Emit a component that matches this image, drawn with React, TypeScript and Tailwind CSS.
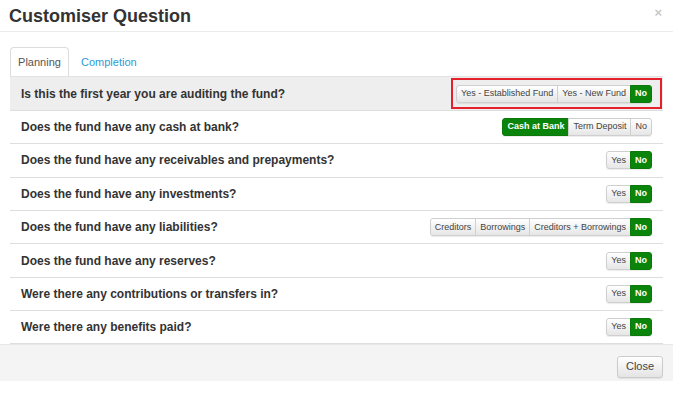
import React from 'react';

type Question = { text: string; options: string[]; active: string };

const questions: Question[] = [
  { text: 'Is this the first year you are auditing the fund?', options: ['Yes - Established Fund', 'Yes - New Fund', 'No'], active: 'No' },
  { text: 'Does the fund have any cash at bank?', options: ['Cash at Bank', 'Term Deposit', 'No'], active: 'Cash at Bank' },
  { text: 'Does the fund have any receivables and prepayments?', options: ['Yes', 'No'], active: 'No' },
  { text: 'Does the fund have any investments?', options: ['Yes', 'No'], active: 'No' },
  { text: 'Does the fund have any liabilities?', options: ['Creditors', 'Borrowings', 'Creditors + Borrowings', 'No'], active: 'No' },
  { text: 'Does the fund have any reserves?', options: ['Yes', 'No'], active: 'No' },
  { text: 'Were there any contributions or transfers in?', options: ['Yes', 'No'], active: 'No' },
  { text: 'Were there any benefits paid?', options: ['Yes', 'No'], active: 'No' },
];

const ButtonGroup: React.FC<{ options: string[]; active: string }> = ({ options, active }) => (
  <div className="flex h-[18px] rounded-[3px] shadow-[0_1px_1px_rgba(0,0,0,0.08)]">
    {options.map((opt, i) => {
      const on = opt === active;
      return (
        <span
          key={opt}
          className={`flex items-center px-[4px] text-[9px] leading-none border ${
            on
              ? 'bg-[#0b840b] border-[#0b7a0b] text-white font-bold'
              : 'bg-gradient-to-b from-white to-[#e6e6e6] border-[#cfcfcf] text-[#444]'
          } ${i === 0 ? 'rounded-l-[3px]' : '-ml-px'} ${i === options.length - 1 ? 'rounded-r-[3px]' : ''}`}
        >
          {opt}
        </span>
      );
    })}
  </div>
);

export default function App() {
  return (
    <div className="w-[685px] h-[393px] bg-white font-['Liberation_Sans',Arial,sans-serif] text-[#333]">
      <div className="w-[673px] h-[381px] flex flex-col bg-white">
        {/* Header */}
        <div className="h-[33px] flex items-center justify-between pl-[9px] pr-[11px] border-b border-[#ececec]">
          <h4 className="text-[18px] font-bold text-[#333] leading-none mt-[1px]">Customiser Question</h4>
          <span className="text-[13px] text-[#c8c8c8] font-bold leading-none -mt-[6px]">×</span>
        </div>

        {/* Body */}
        <div className="flex-1 px-[10px] pt-[15px]">
          <div className="flex h-[29px] text-[11px]">
            <div className="w-[59px] flex items-center justify-center border border-b-0 border-[#dcdcdc] rounded-t-[4px] bg-white text-[#555]">
              Planning
            </div>
            <div className="flex items-center pl-[12px] text-[#2a9ad8]">Completion</div>
          </div>
          <div className="w-[653px]">
            {questions.map((q, idx) => (
              <div
                key={q.text}
                className={`h-[33.4px] flex items-center justify-between pl-[11px] pr-[11px] border-t border-[#dedede] ${
                  idx === 0 ? 'bg-[#eeeeee] border-t-[#e2e2e2]' : 'bg-white'
                } ${idx === questions.length - 1 ? 'border-b' : ''}`}
              >
                <span className="text-[12px] font-bold text-[#333]">{q.text}</span>
                {idx === 0 ? (
                  <div className="border-2 border-[#e3202b] -mr-[10px] pl-[3px] pr-[8px] h-[31px] flex items-center">
                    <ButtonGroup options={q.options} active={q.active} />
                  </div>
                ) : (
                  <ButtonGroup options={q.options} active={q.active} />
                )}
              </div>
            ))}
          </div>
        </div>

        {/* Footer */}
        <div className="h-[38px] bg-[#f4f4f4] flex items-start justify-end pt-[11px] pr-[10px] border-t border-[#e8e8e8]">
          <button className="h-[22px] w-[46px] text-[11px] text-[#444] border border-[#cccccc] rounded-[3px] bg-gradient-to-b from-white to-[#e4e4e4] shadow-[0_1px_1px_rgba(0,0,0,0.08)]">
            Close
          </button>
        </div>
      </div>
    </div>
  );
}
